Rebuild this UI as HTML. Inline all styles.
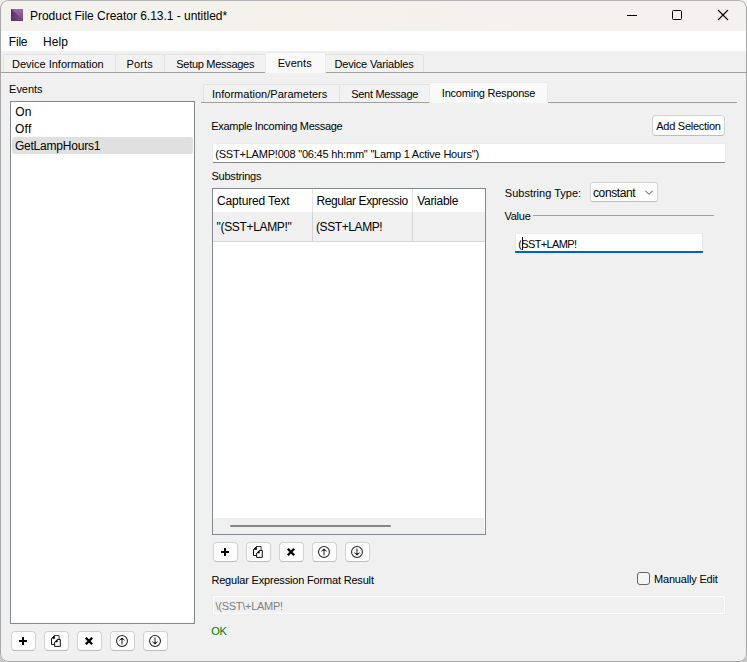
<!DOCTYPE html>
<html lang="en">
<head>
<meta charset="utf-8">
<title>Product File Creator 6.13.1 - untitled*</title>
<style>
*{box-sizing:border-box;margin:0;padding:0}
html,body{width:747px;height:662px;overflow:hidden;background:linear-gradient(180deg,#efefef 0,#efefef 50%,#c8c8c8 100%)}
body{font-family:"Liberation Sans",sans-serif;font-size:11px;color:#000;position:relative}
.win{position:absolute;left:0;top:0;width:747px;height:662px;border-radius:8px;background:#f0f0f0;overflow:hidden}
.frame{position:absolute;left:0;top:0;width:747px;height:662px;border:1px solid #a8a8a8;border-top-color:#b4b4b4;border-bottom-color:#a4a4a4;border-radius:8px;pointer-events:none}
.abs{position:absolute}
.t{position:absolute;white-space:nowrap;line-height:16px;height:16px}
.titlebar{position:absolute;left:0;top:0;width:747px;height:31px;background:linear-gradient(90deg,#f4f2ef 0%,#f5f2ec 40%,#f4f1ef 75%,#f4f1f1 100%)}
.menubar{position:absolute;left:0;top:31px;width:747px;height:20px;background:#fff}
.tab{position:absolute;background:#f2f2f2;border-radius:2px 2px 0 0;border:1px solid #e2e2e2;border-bottom:none}
.tab.sel{background:#f9f9f9;border-color:#ebebeb}
.btn{position:absolute;background:#fdfdfd;border:1px solid #d2d2d2;border-bottom-color:#bcbcbc;border-radius:4px}
.hline{position:absolute;height:1px;background:#a0a0a0}
</style>
</head>
<body>
<div class="win">
<div class="titlebar"></div>
<svg class="abs" style="left:11px;top:9px" width="12" height="12" viewBox="0 0 12 12"><defs><linearGradient id="ga" x1="0" y1="0" x2="1" y2="0"><stop offset="0" stop-color="#5e3162"/><stop offset="0.55" stop-color="#71427a"/><stop offset="1" stop-color="#7f4f84"/></linearGradient><linearGradient id="gb" x1="0" y1="0" x2="0" y2="1"><stop offset="0" stop-color="#a067a4"/><stop offset="0.35" stop-color="#955c9a"/><stop offset="0.7" stop-color="#815086"/><stop offset="1" stop-color="#7a4b7f"/></linearGradient></defs><rect width="12" height="12" fill="url(#ga)"/><path d="M0.5 0H12V11.5Z" fill="url(#gb)"/><path d="M0.5 0V11.5H12" stroke="#5a2c5e" stroke-width="1" fill="none" opacity="0.45"/></svg>
<div class="t" style="left:30.00px;top:8px;font-size:12px;letter-spacing:-0.024px">Product File Creator 6.13.1 - untitled*</div>
<svg class="abs" style="left:626px;top:9px" width="12" height="12" viewBox="0 0 12 12"><path d="M1 6.5H11" stroke="#000" stroke-width="1" fill="none"/></svg>
<svg class="abs" style="left:671px;top:9px" width="12" height="12" viewBox="0 0 12 12"><rect x="1.5" y="1.5" width="9" height="9" rx="1" stroke="#000" stroke-width="1" fill="none"/></svg>
<svg class="abs" style="left:717px;top:9px" width="12" height="12" viewBox="0 0 12 12"><path d="M1 1L11 11M11 1L1 11" stroke="#000" stroke-width="1.1" fill="none"/></svg>
<div class="menubar"></div>
<div class="t" style="left:8.80px;top:34px;font-size:12px;letter-spacing:-0.2px">File</div>
<div class="t" style="left:43.10px;top:34px;font-size:12px;letter-spacing:0.064px">Help</div>
<div class="hline" style="left:0px;top:72px;width:747px;height:1px;"></div>
<div class="tab" style="left:3px;top:54px;width:113px;height:18px;"></div>
<div class="tab" style="left:115px;top:54px;width:50px;height:18px;"></div>
<div class="tab" style="left:164px;top:54px;width:102px;height:18px;"></div>
<div class="tab" style="left:325px;top:54px;width:99px;height:18px;"></div>
<div class="tab sel" style="left:265px;top:52px;width:61px;height:21px;"></div>
<div class="t" style="left:11.95px;top:56px;letter-spacing:0.005px">Device Information</div>
<div class="t" style="left:126.50px;top:56px;letter-spacing:0.165px">Ports</div>
<div class="t" style="left:176.31px;top:56px;letter-spacing:-0.291px">Setup Messages</div>
<div class="t" style="left:277.70px;top:55px;letter-spacing:0.072px">Events</div>
<div class="t" style="left:334.40px;top:56px;letter-spacing:-0.156px">Device Variables</div>
<div class="t" style="left:9.10px;top:81px;letter-spacing:-0.048px">Events</div>
<div class="abs" style="left:10px;top:101px;width:185px;height:523px;background:#fff;border:1px solid #828790"></div>
<div class="abs" style="left:12px;top:137px;width:181px;height:17px;background:#e0e0e0;border-radius:3px"></div>
<div class="t" style="left:15.17px;top:104px;font-size:12px;letter-spacing:0.22px">On</div>
<div class="t" style="left:14.97px;top:121px;font-size:12px;letter-spacing:0.263px">Off</div>
<div class="t" style="left:14.91px;top:138px;font-size:12px;letter-spacing:-0.209px">GetLampHours1</div>
<div class="btn" style="left:11px;top:631px;width:25px;height:20px;"><svg class="abs" style="left:-1px;top:-1px" width="25" height="20" viewBox="-12 -10 25 20"><path d="M-4 0H4M0 -4V4" stroke="#000" stroke-width="2" fill="none"/></svg></div>
<div class="btn" style="left:44px;top:631px;width:25px;height:20px;"><svg class="abs" style="left:-1px;top:-1px" width="25" height="20" viewBox="-12 -10 25 20"><g transform="translate(-12 -10)"><path d="M10.5 4.5H15.1V8.3" stroke="#3a3a3a" stroke-width="1" fill="none"/><path d="M10.5 4.5L7.5 7.5V13.5H10.6" stroke="#111" stroke-width="1" fill="none"/><path d="M13.3 8.5H16.3V15.4H10.6V11.2Z" stroke="#111" stroke-width="1" fill="#fdfdfd" stroke-linejoin="round"/><path d="M10.9 4.3V7.7H7.5Z" fill="#000"/><path d="M13.6 8.3V11.3H10.6Z" fill="#000"/></g></svg></div>
<div class="btn" style="left:77px;top:631px;width:25px;height:20px;"><svg class="abs" style="left:-1px;top:-1px" width="25" height="20" viewBox="-12 -10 25 20"><path d="M-3.2 -3.2L3.2 3.2M3.2 -3.2L-3.2 3.2" stroke="#000" stroke-width="2.3" fill="none"/></svg></div>
<div class="btn" style="left:110px;top:631px;width:25px;height:20px;"><svg class="abs" style="left:-1px;top:-1px" width="25" height="20" viewBox="-12 -10 25 20"><circle cx="0" cy="0" r="5.45" stroke="#222" stroke-width="1.05" fill="none"/><path d="M0 3.6V-1.5" stroke="#7a7a7a" stroke-width="1.7" fill="none"/><path d="M-2.9 -0.4L0 -3L2.9 -0.4" stroke="#555" stroke-width="0.9" fill="none"/><path d="M0 -3.4L2.1 -1.3H-2.1Z" fill="#111"/></svg></div>
<div class="btn" style="left:143px;top:631px;width:25px;height:20px;"><svg class="abs" style="left:-1px;top:-1px" width="25" height="20" viewBox="-12 -10 25 20"><circle cx="0" cy="0" r="5.45" stroke="#222" stroke-width="1.05" fill="none"/><path d="M0 -3.6V1.5" stroke="#7a7a7a" stroke-width="1.7" fill="none"/><path d="M-2.9 0.4L0 3L2.9 0.4" stroke="#555" stroke-width="0.9" fill="none"/><path d="M0 3.4L2.1 1.3H-2.1Z" fill="#111"/></svg></div>
<div class="hline" style="left:201px;top:102px;width:536px;height:1px;"></div>
<div class="tab" style="left:203px;top:84px;width:137px;height:18px;"></div>
<div class="tab" style="left:339px;top:84px;width:91px;height:18px;"></div>
<div class="tab sel" style="left:429px;top:82px;width:119px;height:21px;"></div>
<div class="t" style="left:212.02px;top:86px;letter-spacing:0.015px">Information/Parameters</div>
<div class="t" style="left:351.21px;top:86px;letter-spacing:-0.29px">Sent Message</div>
<div class="t" style="left:441.82px;top:85px;letter-spacing:-0.222px">Incoming Response</div>
<div class="t" style="left:211.30px;top:118px;letter-spacing:-0.297px">Example Incoming Message</div>
<div class="btn" style="left:652px;top:115px;width:73px;height:21px;"></div>
<div class="t" style="left:656.27px;top:118px;letter-spacing:-0.264px">Add Selection</div>
<div class="abs" style="left:212px;top:143px;width:514px;height:20px;background:#fff;border:1px solid #ececec;border-bottom-color:#868686;border-radius:2px"></div>
<div class="t" style="left:215.23px;top:146px;letter-spacing:-0.206px">(SST+LAMP!008 &quot;06:45 hh:mm&quot; &quot;Lamp 1 Active Hours&quot;)</div>
<div class="t" style="left:211.41px;top:168px;letter-spacing:-0.209px">Substrings</div>
<div class="abs" style="left:212px;top:188px;width:274px;height:347px;background:#fff;border:1px solid #828790"></div>
<div class="abs" style="left:213px;top:212px;width:272px;height:30px;background:#f0f0f0;border-bottom:1px solid #d6d6d6"></div>
<div class="abs" style="left:312px;top:189px;width:1px;height:23px;background:#e5e5e5"></div>
<div class="abs" style="left:312px;top:212px;width:1px;height:29px;background:#d4d4d4"></div>
<div class="abs" style="left:412px;top:189px;width:1px;height:23px;background:#e5e5e5"></div>
<div class="abs" style="left:412px;top:212px;width:1px;height:29px;background:#d4d4d4"></div>
<div class="t" style="left:216.92px;top:193px;font-size:12px;letter-spacing:-0.147px">Captured Text</div>
<div class="t" style="left:316.40px;top:193px;font-size:12px;letter-spacing:-0.397px">Regular Expressio</div>
<div class="t" style="left:417.18px;top:193px;font-size:12px;letter-spacing:-0.279px">Variable</div>
<div class="t" style="left:216.60px;top:219px;font-size:12px;letter-spacing:-0.335px">&quot;(SST+LAMP!&quot;</div>
<div class="t" style="left:315.97px;top:219px;font-size:12px;letter-spacing:-0.407px">(SST+LAMP!</div>
<div class="abs" style="left:213px;top:518px;width:271px;height:16px;background:#f0f0f0"></div>
<div class="abs" style="left:230px;top:525px;width:161px;height:2px;background:#868686;border-radius:1px"></div>
<div class="btn" style="left:213px;top:542px;width:25px;height:20px;"><svg class="abs" style="left:-1px;top:-1px" width="25" height="20" viewBox="-12 -10 25 20"><path d="M-4 0H4M0 -4V4" stroke="#000" stroke-width="2" fill="none"/></svg></div>
<div class="btn" style="left:246px;top:542px;width:25px;height:20px;"><svg class="abs" style="left:-1px;top:-1px" width="25" height="20" viewBox="-12 -10 25 20"><g transform="translate(-12 -10)"><path d="M10.5 4.5H15.1V8.3" stroke="#3a3a3a" stroke-width="1" fill="none"/><path d="M10.5 4.5L7.5 7.5V13.5H10.6" stroke="#111" stroke-width="1" fill="none"/><path d="M13.3 8.5H16.3V15.4H10.6V11.2Z" stroke="#111" stroke-width="1" fill="#fdfdfd" stroke-linejoin="round"/><path d="M10.9 4.3V7.7H7.5Z" fill="#000"/><path d="M13.6 8.3V11.3H10.6Z" fill="#000"/></g></svg></div>
<div class="btn" style="left:279px;top:542px;width:25px;height:20px;"><svg class="abs" style="left:-1px;top:-1px" width="25" height="20" viewBox="-12 -10 25 20"><path d="M-3.2 -3.2L3.2 3.2M3.2 -3.2L-3.2 3.2" stroke="#000" stroke-width="2.3" fill="none"/></svg></div>
<div class="btn" style="left:312px;top:542px;width:25px;height:20px;"><svg class="abs" style="left:-1px;top:-1px" width="25" height="20" viewBox="-12 -10 25 20"><circle cx="0" cy="0" r="5.45" stroke="#222" stroke-width="1.05" fill="none"/><path d="M0 3.6V-1.5" stroke="#7a7a7a" stroke-width="1.7" fill="none"/><path d="M-2.9 -0.4L0 -3L2.9 -0.4" stroke="#555" stroke-width="0.9" fill="none"/><path d="M0 -3.4L2.1 -1.3H-2.1Z" fill="#111"/></svg></div>
<div class="btn" style="left:345px;top:542px;width:25px;height:20px;"><svg class="abs" style="left:-1px;top:-1px" width="25" height="20" viewBox="-12 -10 25 20"><circle cx="0" cy="0" r="5.45" stroke="#222" stroke-width="1.05" fill="none"/><path d="M0 -3.6V1.5" stroke="#7a7a7a" stroke-width="1.7" fill="none"/><path d="M-2.9 0.4L0 3L2.9 0.4" stroke="#555" stroke-width="0.9" fill="none"/><path d="M0 3.4L2.1 1.3H-2.1Z" fill="#111"/></svg></div>
<div class="t" style="left:504.81px;top:185px;letter-spacing:0.002px">Substring Type:</div>
<div class="btn" style="left:590px;top:182px;width:68px;height:20px;border-radius:2.5px"><svg class="abs" style="left:53px;top:6px" width="11" height="8" viewBox="0 0 11 8"><path d="M1.3 1.7L5 5.4L8.7 1.7" stroke="#444" stroke-width="0.95" fill="none"/></svg></div>
<div class="t" style="left:593.00px;top:185px;font-size:12px;letter-spacing:-0.389px">constant</div>
<div class="t" style="left:504.44px;top:208px;letter-spacing:-0.253px">Value</div>
<div class="hline" style="left:533px;top:215px;width:181px;height:1px;"></div>
<div class="abs" style="left:515px;top:233px;width:188px;height:19px;background:#fff;border:1px solid #e4e9ee;border-top-color:#ececec;border-bottom:none;border-radius:2px 2px 0 0"></div>
<div class="abs" style="left:515px;top:251px;width:188px;height:2px;background:#0063bf;border-radius:0 0 1px 1px"></div>
<div class="t" style="left:518.13px;top:236px;letter-spacing:-0.612px">(SST+LAMP!</div>
<svg class="abs" style="left:519px;top:236px" width="7" height="15" viewBox="0 0 7 15"><path d="M2.5 3V13" stroke="#fff" stroke-width="1" fill="none" opacity="0.85"/><path d="M3.5 1V14" stroke="#000" stroke-width="1" fill="none"/><path d="M4 4.5H5" stroke="#000" stroke-width="1" fill="none" opacity="0.8"/></svg>
<div class="t" style="left:211.40px;top:572px;letter-spacing:-0.18px">Regular Expression Format Result</div>
<div class="abs" style="left:637px;top:572px;width:13px;height:13px;background:#f5f5f5;border:1px solid #666;border-radius:3px"></div>
<div class="t" style="left:654.00px;top:571px;letter-spacing:-0.181px">Manually Edit</div>
<div class="abs" style="left:213px;top:596px;width:512px;height:18px;background:#f0f0f0;border:1px solid #fcfcfc;border-radius:1px;box-shadow:0 0 0 1px #ececec"></div>
<div class="t" style="left:215.59px;top:598px;letter-spacing:-0.288px;color:#7f7f7f">\(SST\+LAMP!</div>
<div class="t" style="left:211.20px;top:623px;letter-spacing:-0.367px;color:#008000">OK</div>
<div class="frame"></div>
</div>
</body>
</html>
